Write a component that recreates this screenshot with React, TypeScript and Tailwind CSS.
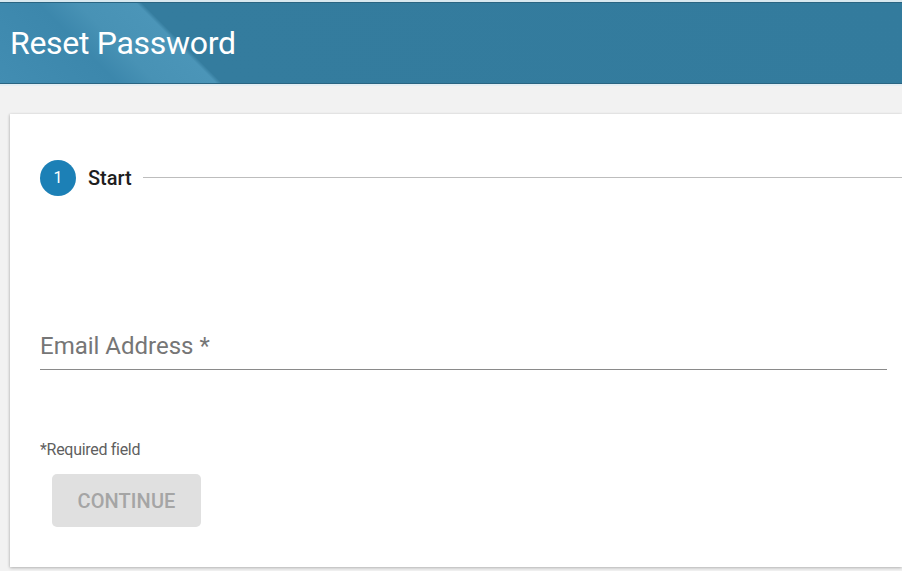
export default function App() {
  return (
    <div className="w-[902px] h-[571px] overflow-hidden bg-[#f2f2f2] font-['Roboto',sans-serif] flex flex-col">
      <div className="h-[2px] bg-[#d8e8ef]" />
      <div className="h-[82px] border-y border-[#2a6582] bg-[#337b9d] bg-[linear-gradient(45deg,#428db2_0%,#3c87ac_12%,#4892b5_16%,#4b95b8_22%,#347c9e_22.6%,#337b9d_100%)] flex items-center pl-[10px]">
        <h1 className="text-white text-[32px] leading-none tracking-[-0.3px] pb-[1px]">Reset Password</h1>
      </div>
      <div className="h-[2px] bg-[#e4eef3]" />
      <div className="flex-1 pt-[28px] pl-[10px]">
        <div className="bg-white h-[453px] shadow-[0_1px_3px_rgba(0,0,0,0.25),-1px_0_2px_rgba(0,0,0,0.06)] pl-[30px] pr-[15px] pt-[46px]">
          <div className="flex items-center h-[36px]">
            <div className="w-[36px] h-[36px] rounded-full bg-[#1c80b6] flex items-center justify-center text-white text-[16px]">1</div>
            <span className="ml-[12px] text-[20px] leading-none font-medium text-[#1e1e1e]">Start</span>
            <div className="flex-1 h-px bg-[#bdbdbd] ml-[11px] mr-[-15px] mt-[-2px]" />
          </div>
          <div className="mt-[136px] border-b border-[#8a8a8a] pb-[9px]">
            <div className="text-[24px] leading-[28px] text-[#767676]">Email Address *</div>
          </div>
          <div className="mt-[72px] text-[16px] leading-none text-[#5f5f5f] tracking-[-0.3px]">*Required field</div>
          <button className="mt-[16px] ml-[12px] w-[149px] h-[53px] rounded-[5px] bg-[#e0e0e0] text-[#a5a5a5] text-[20px] font-medium tracking-[0.1px]">CONTINUE</button>
        </div>
      </div>
    </div>
  );
}
